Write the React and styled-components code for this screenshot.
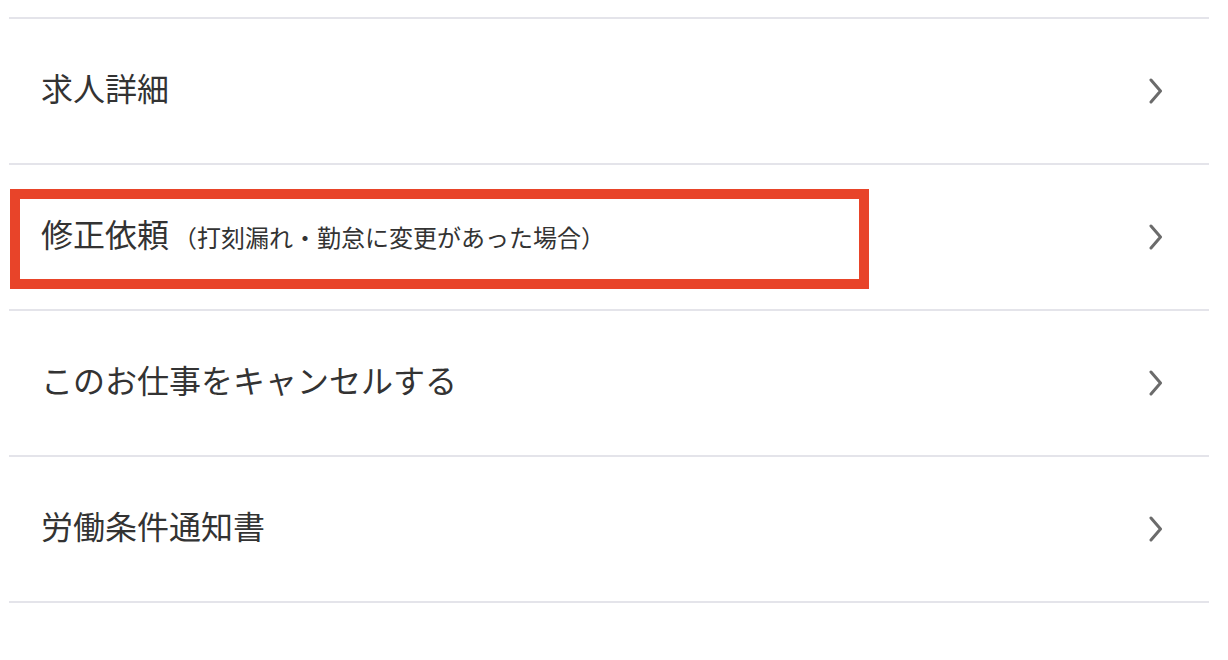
import React from "react";
import styled, { createGlobalStyle } from "styled-components";

const Global = createGlobalStyle`
  html, body { margin: 0; padding: 0; background: #ffffff; }
  body {
    font-family: "Noto Sans CJK JP", "Noto Sans", sans-serif;
    color: #333333;
  }
`;

const List = styled.ul`
  list-style: none;
  margin: 0;
  padding: 17px 0 0 9px;
  width: 1200px;
`;

const Row = styled.li`
  position: relative;
  display: flex;
  align-items: center;
  justify-content: space-between;
  height: 144px;
  padding: 0 46px 0 32px;
  border-top: 2px solid #e4e4ea;
  &:last-child {
    border-bottom: 2px solid #e4e4ea;
  }
`;

const Label = styled.span`
  display: flex;
  align-items: baseline;
  font-size: 32px;
  line-height: 1;
  margin-bottom: 8px;
  color: #333333;
`;

const Note = styled.span`
  font-size: 24px;
  margin-left: 4px;
`;

const Highlight = styled.span`
  position: absolute;
  left: 1px;
  top: 24px;
  width: 839px;
  height: 80px;
  border: 10px solid #e84429;
  pointer-events: none;
`;

const Chevron = () => (
  <svg width="14" height="26" viewBox="0 0 14 26" fill="none">
    <path
      d="M2 2 L11.5 13 L2 24"
      stroke="#6b6b6b"
      strokeWidth="3"
      strokeLinecap="round"
      strokeLinejoin="round"
    />
  </svg>
);

const items = [
  { label: "求人詳細" },
  { label: "修正依頼", note: "（打刻漏れ・勤怠に変更があった場合）", highlight: true },
  { label: "このお仕事をキャンセルする" },
  { label: "労働条件通知書" },
];

export default function App() {
  return (
    <>
      <Global />
      <List>
        {items.map((it) => (
          <Row key={it.label}>
            {it.highlight && <Highlight />}
            <Label>
              {it.label}
              {it.note && <Note>{it.note}</Note>}
            </Label>
            <Chevron />
          </Row>
        ))}
      </List>
    </>
  );
}
